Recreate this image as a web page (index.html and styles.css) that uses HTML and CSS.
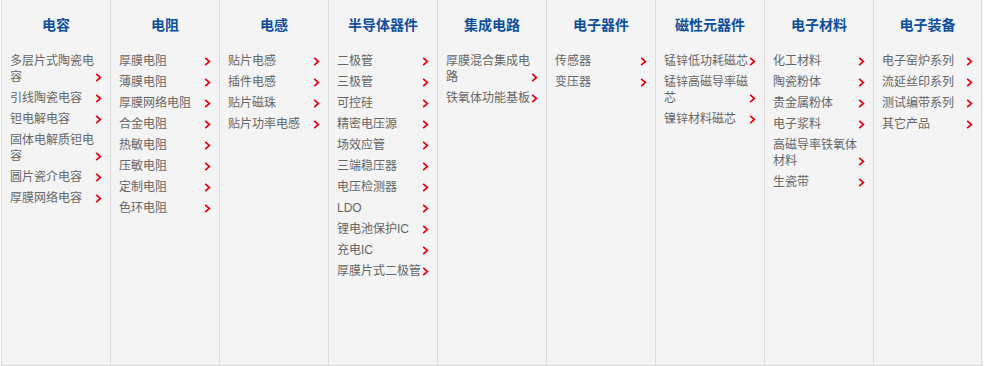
FILE: index.html
```html
<!DOCTYPE html>
<html lang="zh-CN">

<head>
  <meta charset="UTF-8">
  <title>产品分类</title>
  <link rel="stylesheet" href="styles.css">
</head>

<body>
  <div class="menu" id="menu"></div>

  <script>
    const groups = [
      ["电容", ["多层片式陶瓷电容", "引线陶瓷电容", "钽电解电容", "固体电解质钽电容", "圆片瓷介电容", "厚膜网络电容"]],
      ["电阻", ["厚膜电阻", "薄膜电阻", "厚膜网络电阻", "合金电阻", "热敏电阻", "压敏电阻", "定制电阻", "色环电阻"]],
      ["电感", ["贴片电感", "插件电感", "贴片磁珠", "贴片功率电感"]],
      ["半导体器件", ["二极管", "三极管", "可控硅", "精密电压源", "场效应管", "三端稳压器", "电压检测器", "LDO", "锂电池保护IC", "充电IC", "厚膜片式二极管"]],
      ["集成电路", ["厚膜混合集成电路", "铁氧体功能基板"]],
      ["电子器件", ["传感器", "变压器"]],
      ["磁性元器件", ["锰锌低功耗磁芯", "锰锌高磁导率磁芯", "镍锌材料磁芯"]],
      ["电子材料", ["化工材料", "陶瓷粉体", "贵金属粉体", "电子浆料", "高磁导率铁氧体材料", "生瓷带"]],
      ["电子装备", ["电子窑炉系列", "流延丝印系列", "测试编带系列", "其它产品"]]
    ];

    const arrow = '<svg class="arrow" width="7" height="9" viewBox="0 0 7 9"><polyline points="1.2,0.8 5.4,4.5 1.2,8.2" fill="none" stroke="#e60012" stroke-width="1.7"/></svg>';

    const menu = document.getElementById("menu");
    menu.innerHTML = groups.map(([title, items]) => `
      <div class="col">
        <h3 class="col-title">${title}</h3>
        <ul class="items">
          ${items.map(name => `<li><a href="#"><span class="name">${name}</span>${arrow}</a></li>`).join("")}
        </ul>
      </div>`).join("");
  </script>
</body>

</html>
```

FILE: styles.css
```css
body {
  margin: 0;
  background: #fff;
  font-family: "Liberation Sans", "Noto Sans CJK SC", sans-serif;
}

.menu {
  display: grid;
  grid-template-columns: repeat(9, 109px);
  margin-left: 1px;
  width: 982px;
  height: 365px;
  background: #f4f4f4;
  border-bottom: 1px solid #dcdcdc;
}

.col {
  border-left: 1px solid #dcdcdc;
  padding: 0 8px;
}

.col:last-child {
  border-right: 1px solid #dcdcdc;
}

.col-title {
  margin: 0;
  padding-top: 16px;
  line-height: 18px;
  font-size: 14px;
  font-weight: bold;
  color: #0d4f9d;
  text-align: center;
}

.items {
  list-style: none;
  margin: 0;
  padding: 19px 0 0;
}

.items li {
  margin-bottom: 5px;
}

.items a {
  display: flex;
  align-items: flex-end;
  justify-content: space-between;
  font-size: 12px;
  line-height: 16px;
  color: #666;
  text-decoration: none;
}

.name {
  width: 86px;
}

.arrow {
  flex: none;
  margin-bottom: 3px;
}
```
